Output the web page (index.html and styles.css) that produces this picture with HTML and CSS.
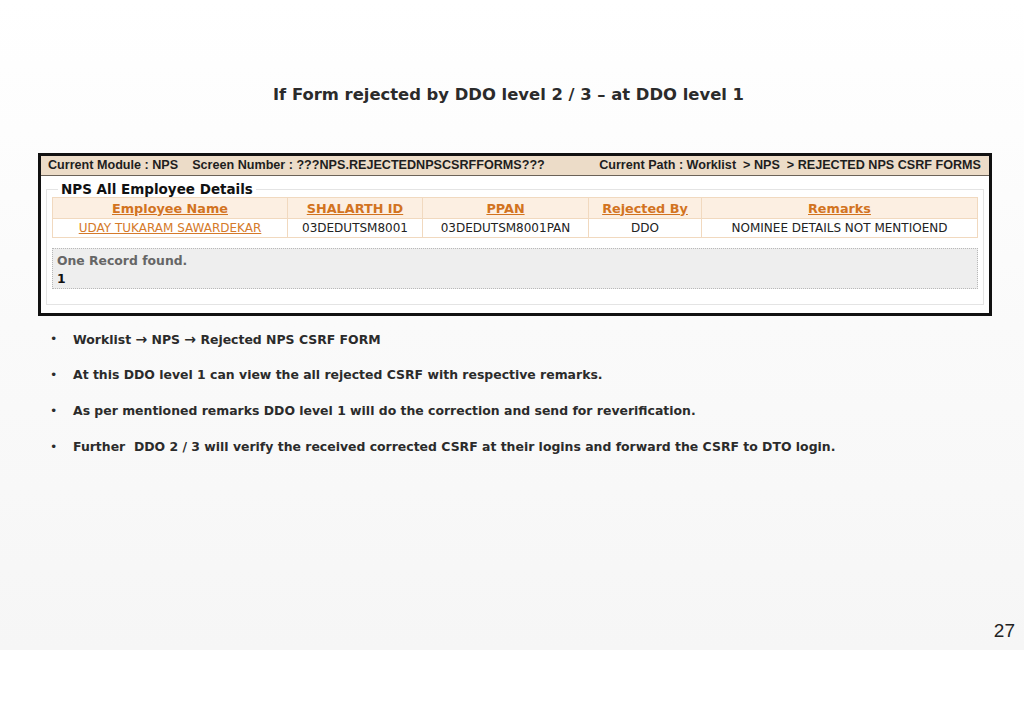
FILE: index.html
```html
<!DOCTYPE html>
<html>
<head>
<meta charset="utf-8">
<link rel="stylesheet" href="styles.css">
</head>
<body>
<div class="slide">
  <h1 class="title">If Form rejected by DDO level 2 / 3 – at DDO level 1</h1>
  <div class="shot">
    <div class="bar">
      <span class="bar-left"><span>Current Module : NPS</span><span>Screen Number : ???NPS.REJECTEDNPSCSRFFORMS???</span></span>
      <span class="bar-right">Current Path : Worklist&nbsp; &gt; NPS&nbsp; &gt; REJECTED NPS CSRF FORMS</span>
    </div>
    <fieldset class="panel">
      <legend class="legend">NPS All Employee Details</legend>
      <table class="grid">
        <colgroup>
          <col class="c1"><col class="c2"><col class="c3"><col class="c4"><col class="c5">
        </colgroup>
        <thead>
          <tr>
            <th><a href="#">Employee Name</a></th>
            <th><a href="#">SHALARTH ID</a></th>
            <th><a href="#">PPAN</a></th>
            <th><a href="#">Rejected By</a></th>
            <th><a href="#">Remarks</a></th>
          </tr>
        </thead>
        <tbody>
          <tr>
            <td><a href="#" class="name">UDAY TUKARAM SAWARDEKAR</a></td>
            <td>03DEDUTSM8001</td>
            <td>03DEDUTSM8001PAN</td>
            <td>DDO</td>
            <td>NOMINEE DETAILS NOT MENTIOEND</td>
          </tr>
        </tbody>
      </table>
      <div class="found">
        <div class="found-text">One Record found.</div>
        <div class="found-num">1</div>
      </div>
    </fieldset>
  </div>
  <ul class="points">
    <li>Worklist <span class="arrow">&#x2192;</span> NPS <span class="arrow">&#x2192;</span> Rejected NPS CSRF FORM</li>
    <li>At this DDO level 1 can view the all rejected CSRF with respective remarks.</li>
    <li>As per mentioned remarks DDO level 1 will do the correction and send for reverification.</li>
    <li>Further&nbsp; DDO 2 / 3 will verify the received corrected CSRF at their logins and forward the CSRF to DTO login.</li>
  </ul>
  <div class="pagenum">27</div>
</div>
</body>
</html>
```
FILE: styles.css
```css
* { box-sizing: border-box; }
html, body { margin: 0; padding: 0; background: #ffffff; }
body { width: 1024px; height: 724px; overflow: hidden; }

.slide {
  height: 650px;
  background: linear-gradient(#ffffff 0%, #fafafa 50%, #f6f6f6 100%);
  display: flex;
  flex-direction: column;
}

.title {
  margin: 84px 0 0 0;
  text-align: center;
  font-family: "DejaVu Sans", sans-serif;
  font-weight: bold;
  font-size: 16.4px;
  line-height: 22px;
  color: #2b2b2b;
  padding-right: 7px;
}

.shot {
  margin: 47px 0 0 38px;
  width: 954px;
  height: 163px;
  border: 3px solid #111;
  background: #ffffff;
  display: flex;
  flex-direction: column;
}

.bar {
  height: 20px;
  background: #ecdcc8;
  border-bottom: 1px solid #6b6258;
  display: flex;
  justify-content: space-between;
  align-items: center;
  padding: 0 8px 1px 7px;
  font-family: "Liberation Sans", Arial, sans-serif;
  font-weight: bold;
  font-size: 12.6px;
  color: #1e1e1e;
  white-space: pre;
}
.bar-left { display: flex; gap: 14px; }

.panel {
  margin: 6px 5px 8px 5px;
  padding: 0 5px 10px 5px;
  border: 1px solid #e4e4e4;
  flex: 1;
  min-width: 0;
}

.legend {
  padding: 0 3px;
  margin-left: 6px;
  font-family: "DejaVu Sans", Verdana, sans-serif;
  font-weight: bold;
  font-size: 13.5px;
  line-height: 15px;
  color: #111;
}

.grid {
  width: 100%;
  border-collapse: collapse;
  font-family: "DejaVu Sans", Verdana, sans-serif;
  font-size: 12px;
  table-layout: fixed;
}
.c1 { width: 235px; }
.c2 { width: 135px; }
.c3 { width: 166px; }
.c4 { width: 113px; }
.c5 { width: auto; }

.grid th {
  background: #fcefe2;
  border: 1px solid #f1d9bf;
  height: 21px;
  font-size: 12.8px;
  font-weight: bold;
  padding: 0;
}
.grid td {
  background: #ffffff;
  border: 1px solid #f1d9bf;
  height: 19px;
  text-align: center;
  color: #222;
  padding: 0;
}
.grid a {
  color: #d2731f;
  text-decoration: underline;
}
.grid a.name { color: #d57a2a; }

.found {
  margin-top: 10px;
  height: 41px;
  background: #eeeeee;
  border: 1px dotted #b8b8b8;
  padding: 3px 4px;
  font-family: "DejaVu Sans", Verdana, sans-serif;
  font-weight: bold;
  font-size: 12.4px;
  line-height: 18px;
}
.found-text { color: #666666; }
.found-num { color: #111111; }

.points {
  list-style: none;
  margin: 13px 0 0 0;
  padding: 0 0 0 50px;
  font-family: "DejaVu Sans", sans-serif;
  font-weight: bold;
  font-size: 12.45px;
  color: #2b2b2b;
}
.points li {
  height: 36px;
  line-height: 20px;
  position: relative;
  padding-left: 23px;
}
.points li::before {
  content: "•";
  position: absolute;
  left: 0;
  top: 0;
  font-weight: normal;
}
.arrow { font-weight: bold; font-size: 14px; }

.pagenum {
  margin-top: auto;
  margin-bottom: 8px;
  align-self: flex-end;
  margin-right: 9px;
  font-family: "Liberation Sans", Arial, sans-serif;
  font-size: 19px;
  color: #222;
}
```
